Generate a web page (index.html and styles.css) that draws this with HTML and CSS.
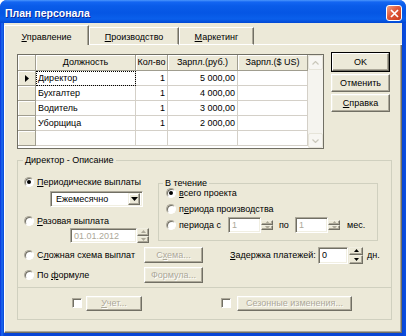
FILE: index.html
```html
<!DOCTYPE html>
<html lang="ru">
<head>
    <meta charset="UTF-8">
    <title>План персонала</title>
    <link rel="stylesheet" href="styles.css">
</head>
<body>
<div class="window">
    <div class="titlebar">
        <span class="title">План персонала</span>
        <span class="btn-close">
            <svg width="9" height="9" viewBox="0 0 9 9"><path d="M1 1L8 8M8 1L1 8" stroke="#fff" stroke-width="1.7"/></svg>
        </span>
    </div>
    <div class="frame">
        <div class="client">
            <div class="tabs">
                <div class="tab tab-active"><u>У</u>правление</div>
                <div class="tab tab-prod"><u>П</u>роизводство</div>
                <div class="tab tab-mark"><u>М</u>аркетинг</div>
                <div class="tab-rest"></div>
            </div>
            <div class="page">
                <div class="top">
                    <div class="grid-box">
                        <div class="grid">
                            <div class="cell fixed"></div>
                            <div class="cell fixed center">Должность</div>
                            <div class="cell fixed center">Кол-во</div>
                            <div class="cell fixed center">Зарпл.(руб.)</div>
                            <div class="cell fixed center">Зарпл.($ US)</div>

                            <div class="cell fixed ind"><svg width="4" height="7" viewBox="0 0 4 7"><path d="M0 0L4 3.5L0 7Z" fill="#000"/></svg></div>
                            <div class="cell focus">Директор</div>
                            <div class="cell num">1</div>
                            <div class="cell num">5 000,00</div>
                            <div class="cell"></div>

                            <div class="cell fixed"></div>
                            <div class="cell">Бухгалтер</div>
                            <div class="cell num">1</div>
                            <div class="cell num">4 000,00</div>
                            <div class="cell"></div>

                            <div class="cell fixed"></div>
                            <div class="cell">Водитель</div>
                            <div class="cell num">1</div>
                            <div class="cell num">3 000,00</div>
                            <div class="cell"></div>

                            <div class="cell fixed"></div>
                            <div class="cell">Уборщица</div>
                            <div class="cell num">1</div>
                            <div class="cell num">2 000,00</div>
                            <div class="cell"></div>

                            <div class="cell fixed"></div>
                            <div class="cell"></div>
                            <div class="cell"></div>
                            <div class="cell"></div>
                            <div class="cell"></div>
                        </div>
                        <div class="scrollbar">
                            <div class="sb-btn"><svg width="7" height="4" viewBox="0 0 7 4"><path d="M0.5 3.5L3.5 0.5L6.5 3.5" fill="none" stroke="#C9C7BA" stroke-width="1.2"/></svg></div>
                            <div class="sb-track"></div>
                            <div class="sb-btn"><svg width="7" height="4" viewBox="0 0 7 4"><path d="M0.5 0.5L3.5 3.5L6.5 0.5" fill="none" stroke="#C9C7BA" stroke-width="1.2"/></svg></div>
                        </div>
                    </div>
                    <div class="buttons">
                        <div class="btn btn-default"><span class="btn-face">OK</span></div>
                        <div class="btn">Отменить</div>
                        <div class="btn"><span><u>С</u>правка</span></div>
                    </div>
                </div>

                <fieldset class="group">
                    <legend>Директор - Описание</legend>
                    <div class="block-a">
                        <div class="col-left">
                            <div class="radio-row r1"><span class="radio on"></span><span><u>П</u>ериодические выплаты</span></div>
                            <div class="combo">
                                <span class="combo-text">Ежемесячно</span>
                                <span class="combo-btn"><svg width="7" height="4" viewBox="0 0 7 4"><path d="M0 0H7L3.5 4Z" fill="#000"/></svg></span>
                            </div>
                            <div class="radio-row r2"><span class="radio"></span><span><u>Р</u>азовая выплата</span></div>
                            <div class="date-row">
                                <span class="edit disabled date">01.01.2012</span>
                                <span class="spin off">
                                    <span class="spin-btn"><svg width="5" height="3" viewBox="0 0 5 3"><path d="M0 3L2.5 0L5 3Z"/></svg></span>
                                    <span class="spin-btn"><svg width="5" height="3" viewBox="0 0 5 3"><path d="M0 0H5L2.5 3Z"/></svg></span>
                                </span>
                            </div>
                        </div>
                        <fieldset class="period">
                            <legend>В течение</legend>
                            <div class="radio-row p1"><span class="radio on"></span><span><u>в</u>сего проекта</span></div>
                            <div class="radio-row"><span class="radio"></span><span>п<u>е</u>риода производства</span></div>
                            <div class="radio-row">
                                <span class="radio"></span>
                                <span class="from-label">перио<u>д</u>а с</span>
                                <span class="edit disabled small">1</span>
                                <span class="spin off">
                                    <span class="spin-btn"><svg width="5" height="3" viewBox="0 0 5 3"><path d="M0 3L2.5 0L5 3Z"/></svg></span>
                                    <span class="spin-btn"><svg width="5" height="3" viewBox="0 0 5 3"><path d="M0 0H5L2.5 3Z"/></svg></span>
                                </span>
                                <span class="to-label">по</span>
                                <span class="edit disabled small">1</span>
                                <span class="spin off">
                                    <span class="spin-btn"><svg width="5" height="3" viewBox="0 0 5 3"><path d="M0 3L2.5 0L5 3Z"/></svg></span>
                                    <span class="spin-btn"><svg width="5" height="3" viewBox="0 0 5 3"><path d="M0 0H5L2.5 3Z"/></svg></span>
                                </span>
                                <span class="unit">мес.</span>
                            </div>
                        </fieldset>
                    </div>

                    <div class="row row-b">
                        <div class="radio-row wide"><span class="radio"></span><span>С<u>л</u>ожная схема выплат</span></div>
                        <div class="btn off small-btn"><span>С<u>х</u>ема...</span></div>
                        <span class="delay-label"><u>З</u>адержка платежей:</span>
                        <span class="edit delay">0</span>
                        <span class="spin big">
                            <span class="spin-btn"><svg width="5" height="3" viewBox="0 0 5 3"><path d="M0 3L2.5 0L5 3Z"/></svg></span>
                            <span class="spin-btn"><svg width="5" height="3" viewBox="0 0 5 3"><path d="M0 0H5L2.5 3Z"/></svg></span>
                        </span>
                        <span class="unit">дн.</span>
                    </div>
                    <div class="row row-c">
                        <div class="radio-row wide"><span class="radio"></span><span>По <u>ф</u>ормуле</span></div>
                        <div class="btn off small-btn">Формула...</div>
                    </div>

                    <div class="separator"></div>

                    <div class="row row-d">
                        <span class="check"></span>
                        <div class="btn off btn-account"><span><u>У</u>чет...</span></div>
                        <span class="check check-2"></span>
                        <div class="btn off btn-season">Сезонные изменения...</div>
                    </div>
                </fieldset>
            </div>
        </div>
    </div>
</div>
</body>
</html>
```

FILE: styles.css
```css
* {
    box-sizing: border-box;
}
body {
    margin: 0;
    font-family: "Liberation Sans", Arial, sans-serif;
    font-size: 9px;
    color: #000;
    background: #fff;
}
u {
    text-decoration: underline;
    text-underline-offset: 1px;
}

/* window frame */
.window {
    width: 406px;
    height: 336px;
    display: flex;
    flex-direction: column;
    background: #0845d6;
    border-radius: 7px 7px 0 0;
    overflow: hidden;
}
.titlebar {
    height: 23px;
    flex: none;
    display: flex;
    align-items: center;
    padding: 2px 4px 0 5px;
    color: #fff;
    background: linear-gradient(#4b97fc 0, #1466f2 2px, #0a5ce9 6px, #0556e4 13px, #0a5feb 19px, #0048d4 23px);
}
.title {
    flex: 1;
    font-size: 10.5px;
    font-weight: bold;
    text-shadow: 1px 1px 0 #0a2a9c;
}
.btn-close {
    width: 16px;
    height: 16px;
    margin-top: 1px;
    border: 1px solid #fff;
    border-radius: 3px;
    display: flex;
    align-items: center;
    justify-content: center;
    background: linear-gradient(135deg, #f2a083, #e0593a 45%, #c8391a);
}
.frame {
    flex: 1;
    display: flex;
    padding: 0 4px 3px;
    background: linear-gradient(to right, #0831d9, #1c6cf0 2px, #0845d6 4px, #0845d6 402px, #0a4fe0);
}
.client {
    flex: 1;
    display: flex;
    flex-direction: column;
    background: #ece9d8;
}

/* tabs */
.tabs {
    height: 22px;
    flex: none;
    display: flex;
    align-items: flex-end;
}
.tab {
    height: 18px;
    padding-top: 4px;
    text-align: center;
    line-height: 11px;
    border-top: 1px solid #fff;
    border-left: 1px solid #fff;
    border-right: 1px solid #716f64;
    border-bottom: 1px solid #fff;
    box-shadow: inset -1px 0 0 #aca899;
}
.tab-active {
    width: 85px;
    height: 20px;
    padding-top: 6px;
    border-bottom: none;
}
.tab-prod {
    width: 90px;
}
.tab-mark {
    width: 75px;
}
.tab-rest {
    flex: 1;
    height: 1px;
    background: #fff;
}
.page {
    flex: 1;
    padding: 9px 0 0 12px;
    border-left: 1px solid #fff;
    border-right: 1px solid #716f64;
    border-bottom: 1px solid #716f64;
    box-shadow: inset -1px -1px 0 #aca899;
}

/* string grid */
.top {
    display: flex;
    height: 95px;
}
.grid-box {
    width: 307px;
    height: 95px;
    display: flex;
    background: #fff;
    border: 1px solid #716f64;
}
.grid {
    display: grid;
    grid-template-columns: 18px 100px 32px 70px 70px;
    grid-template-rows: 16px repeat(5, 15px);
    align-content: start;
}
.cell {
    border-right: 1px solid #d4d0c8;
    border-bottom: 1px solid #d4d0c8;
    padding: 0 2px;
    line-height: 14px;
    white-space: nowrap;
    overflow: hidden;
}
.fixed {
    background: #ece9d8;
    border-right-color: #a09d8f;
    border-bottom-color: #a09d8f;
    box-shadow: inset 1px 1px 0 #fff;
}
.center {
    text-align: center;
    padding: 0;
    line-height: 15px;
}
.num {
    text-align: right;
}
.ind {
    display: flex;
    align-items: center;
    justify-content: center;
}
.focus {
    outline: 1px dotted #000;
    outline-offset: -1px;
}
.scrollbar {
    width: 15px;
    display: flex;
    flex-direction: column;
    background: #f5f4ef;
}
.sb-btn {
    height: 15px;
    display: flex;
    align-items: center;
    justify-content: center;
    border: 1px solid #e6e4d9;
    border-radius: 2px;
    background: #f7f6f2;
}
.sb-track {
    flex: 1;
}

/* buttons */
.buttons {
    margin: -2px 0 0 7px;
    display: flex;
    flex-direction: column;
    gap: 2px;
}
.btn {
    width: 59px;
    height: 18px;
    display: flex;
    align-items: center;
    justify-content: center;
    white-space: nowrap;
    background: #ece9d8;
    border: 1px solid;
    border-color: #fff #716f64 #716f64 #fff;
    box-shadow: inset -1px -1px 0 #aca899, inset 1px 1px 0 #f1efe2;
}
.btn-default {
    height: 20px;
    border: 1px solid #000;
    box-shadow: none;
    padding: 0;
}
.btn-face {
    width: 100%;
    height: 100%;
    display: flex;
    align-items: center;
    justify-content: center;
    border: 1px solid;
    border-color: #fff #716f64 #716f64 #fff;
    box-shadow: inset -1px -1px 0 #aca899;
}
.btn.off {
    color: #aca899;
    text-shadow: 1px 1px 0 #fff;
}

/* group boxes */
.group {
    width: 375px;
    height: 165px;
    margin: 6px 0 0;
    padding: 0;
    min-width: 0;
    border: 1px solid #d0d0bf;
}
.group legend {
    margin-left: 5px;
    padding: 0 2px;
    line-height: 11px;
}
.block-a {
    display: flex;
    height: 77px;
}
.col-left {
    width: 140px;
    padding-left: 6px;
}
.radio-row {
    display: flex;
    align-items: center;
    height: 12px;
    white-space: nowrap;
}
.r1 {
    margin-top: 10px;
}
.r2 {
    margin-top: 8px;
}
.radio {
    flex: none;
    width: 10px;
    height: 10px;
    margin-right: 3px;
    border-radius: 50%;
    background: #fff;
    border: 1px solid;
    border-color: #aca899 #fff #fff #aca899;
    box-shadow: inset 1px 1px 0 #716f64;
    display: flex;
    align-items: center;
    justify-content: center;
}
.radio.on::after {
    content: "";
    width: 4px;
    height: 4px;
    border-radius: 50%;
    background: #000;
}
.check {
    flex: none;
    width: 10px;
    height: 10px;
    background: #fff;
    border: 1px solid;
    border-color: #aca899 #fff #fff #aca899;
    box-shadow: inset 1px 1px 0 #716f64;
}

/* edits */
.combo,
.edit {
    background: #fff;
    border: 1px solid;
    border-color: #aca899 #fff #fff #aca899;
    box-shadow: inset 1px 1px 0 #716f64, inset -1px -1px 0 #f1efe2;
}
.combo {
    width: 93px;
    height: 16px;
    margin: 3px 0 0 26px;
    display: flex;
    align-items: center;
    padding: 2px 2px 2px 0;
}
.combo-text {
    flex: 1;
    padding-left: 5px;
}
.combo-btn {
    width: 12px;
    height: 12px;
    display: flex;
    align-items: center;
    justify-content: center;
    background: #ece9d8;
    border: 1px solid;
    border-color: #f1efe2 #716f64 #716f64 #f1efe2;
    box-shadow: inset -1px -1px 0 #aca899, inset 1px 1px 0 #fff;
}
.edit {
    height: 16px;
    display: flex;
    align-items: center;
    padding-left: 3px;
}
.edit.disabled {
    color: #aca899;
}
.date-row {
    display: flex;
    height: 15px;
    margin: 1px 0 0 46px;
}
.date {
    width: 67px;
    height: 15px;
}
.spin {
    width: 12px;
    display: flex;
    flex-direction: column;
}
.spin-btn {
    flex: 1;
    display: flex;
    align-items: center;
    justify-content: center;
    background: #ece9d8;
    border: 1px solid;
    border-color: #f1efe2 #716f64 #716f64 #f1efe2;
    box-shadow: inset -1px -1px 0 #aca899;
}
.spin-btn svg {
    fill: #000;
}
.spin.off .spin-btn svg {
    fill: #aca899;
}

/* "В течение" box */
.period {
    width: 220px;
    height: 63px;
    margin: 12px 0 0 0;
    padding: 0;
    min-width: 0;
    border: 1px solid #d0d0bf;
}
.period legend {
    margin-left: 4px;
    padding: 0 2px;
    line-height: 10px;
}
.period .radio-row {
    height: 16px;
    margin-left: 7px;
}
.period .p1 {
    margin-top: -3px;
}
.from-label {
    width: 49px;
}
.small {
    width: 33px;
}
.to-label {
    width: 22px;
    padding-left: 6px;
}
.unit {
    margin-left: 7px;
}

/* lower rows */
.row {
    display: flex;
    align-items: center;
    height: 18px;
    padding-left: 6px;
}
.row-b {
    margin-top: 3px;
}
.row-c {
    margin-top: 2px;
}
.wide {
    width: 120px;
}
.small-btn {
    height: 16px;
}
.delay-label {
    width: 88px;
    margin-left: 27px;
}
.delay {
    width: 30px;
    height: 17px;
    color: #000;
}
.spin.big {
    width: 14px;
    height: 17px;
    margin-left: 1px;
}
.row-b .unit {
    margin-left: 4px;
}
.separator {
    margin-top: 3px;
    border-top: 1px solid #d0d0bf;
}
.row-d {
    margin-top: 6px;
    padding-left: 54px;
}
.btn-account {
    width: 56px;
    height: 15px;
    margin-left: 4px;
}
.check-2 {
    margin-left: 79px;
}
.btn-season {
    width: 115px;
    height: 15px;
    margin-left: 6px;
}
```
